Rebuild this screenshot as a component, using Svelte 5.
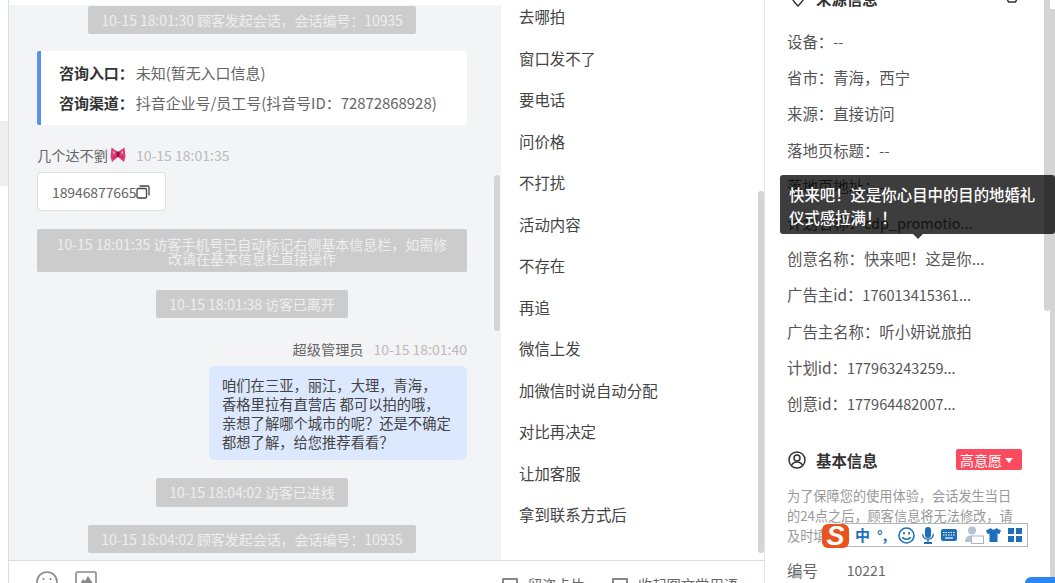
<script>
	const replies = ['去哪拍', '窗口发不了', '要电话', '问价格', '不打扰', '活动内容', '不存在', '再追', '微信上发', '加微信时说自动分配', '对比再决定', '让加客服', '拿到联系方式后'];
	const source = [
		['设备', '--'],
		['省市', '青海，西宁'],
		['来源', '直接访问'],
		['落地页标题', '--'],
		['落地页地址', '--'],
		['计划名称', 'cdp_promotio...'],
		['创意名称', '快来吧！这是你...'],
		['广告主id', '176013415361...'],
		['广告主名称', '听小妍说旅拍'],
		['计划id', '177963243259...'],
		['创意id', '177964482007...']
	];
	// values in latin letters and digits run narrower than the labels
	const isLatin = (v) => /^[\x00-\x7f]/.test(v);
</script>

<div class="page">
	<aside class="rail"><div class="rail-mark"></div></aside>

	<div class="work">
		<div class="columns">
			<section class="chat">
				<div class="notice">10-15 18:01:30 顾客发起会话，会话编号：10935</div>

				<div class="entry">
					<p><b>咨询入口：</b>未知(暂无入口信息)</p>
					<p><b>咨询渠道：</b>抖音企业号/员工号(抖音号ID：72872868928)</p>
				</div>

				<div class="meta">
					<span class="who">几个达不劉</span>
					<svg class="bow" viewBox="0 0 16 16" width="16" height="16">
						<path d="M8 5 1.500.500.500 9.500 2 15l6-5 6 5 1.500-5.500-1-9z" fill="#e23c78" />
						<path d="M3 3.500 5 6 3 7zM13 3.500 11 6l2 1z" fill="#f9a8c6" />
						<path d="M3 11l2-2M13 11l-2-2" stroke="#9c1c4c" stroke-width="1" />
						<rect x="6.500" y="4.500" width="3" height="5.500" rx="1" fill="#8e1440" />
					</svg>
					<span class="time">10-15 18:01:35</span>
				</div>
				<div class="phone">
					18946877665
					<svg viewBox="0 0 14 14" width="14" height="14" fill="none" stroke="#444" stroke-width="1.3">
						<rect x="1" y="3.500" width="9.500" height="9.500" rx="1.200" />
						<path d="M3.500 1h8.200A1.300 1.300 0 0 1 13 2.300v8.200" />
					</svg>
				</div>

				<div class="notice wide">10-15 18:01:35 访客手机号已自动标记右侧基本信息栏，如需修改请在基本信息栏直接操作</div>
				<div class="notice short">10-15 18:01:38 访客已离开</div>

				<div class="meta mine">
					<span class="who">超级管理员</span>
					<span class="time">10-15 18:01:40</span>
				</div>
				<div class="bubble">咱们在三亚，丽江，大理，青海，<br />香格里拉有直营店 都可以拍的哦，<br />亲想了解哪个城市的呢？还是不确定<br />都想了解，给您推荐看看？</div>

				<div class="notice short">10-15 18:04:02 访客已进线</div>
				<div class="notice last">10-15 18:04:02 顾客发起会话，会话编号：10935</div>

				<div class="thumb chat-thumb"></div>
			</section>

			<section class="replies">
				{#each replies as item}
					<div class="reply">{item}</div>
				{/each}
				<div class="thumb reply-thumb"></div>
			</section>
		</div>

		<footer class="tools">
			<div class="tools-left">
				<svg viewBox="0 0 22 22" width="22" height="22" fill="none" stroke="#888" stroke-width="1.6">
					<circle cx="11" cy="11" r="10" />
					<circle cx="7.500" cy="8" r="1.100" fill="#888" stroke="none" />
					<circle cx="14.500" cy="8" r="1.100" fill="#888" stroke="none" />
				</svg>
				<svg viewBox="0 0 22 22" width="22" height="22" fill="none" stroke="#888" stroke-width="1.6">
					<rect x="1" y="1" width="20" height="20" rx="1.500" />
					<path d="M3 17l5-9 2 2 3-5 6 9v3H3z" fill="#888" stroke="none" />
				</svg>
			</div>
			<div class="tools-right">
				<label class="check"><span class="box"></span>留资卡片</label>
				<label class="check"><span class="box"></span>收起图文常用语</label>
			</div>
		</footer>
	</div>

	<section class="info">
		<div class="info-body">
			<h3 class="head first">
				<svg viewBox="0 0 16 18" width="16" height="18" fill="none" stroke="#333" stroke-width="1.500">
					<path d="M8 17C4 13 1.500 10 1.500 7a6.500 6.500 0 0 1 13 0c0 3-2.500 6-6.500 10z" />
					<circle cx="8" cy="7" r="2" />
				</svg>
				<span>来源信息</span>
				<svg class="head-end" viewBox="0 0 16 16" width="16" height="16" fill="none" stroke="#333" stroke-width="1.500">
					<path d="M4.500 1h7L15 8l-3.500 7h-7L1 8z" />
				</svg>
			</h3>

			<ul class="rows">
				{#each source as [k, v]}
					<li>{k}：<span class:latin={isLatin(v)}>{v}</span></li>
				{/each}
			</ul>

			<h3 class="head second">
				<svg viewBox="0 0 18 18" width="18" height="18" fill="none" stroke="#333" stroke-width="1.500">
					<circle cx="9" cy="9" r="8" />
					<circle cx="9" cy="7" r="3" />
					<path d="M3.500 14.500c1-2.500 3-3.500 5.500-3.500s4.500 1 5.500 3.500" />
				</svg>
				<span>基本信息</span>
				<span class="tag">高意愿<i class="caret"></i></span>
			</h3>

			<p class="hint">为了保障您的使用体验，会话发生当日的24点之后，顾客信息将无法修改，请及时填写</p>
			<div class="field"><span>编号</span><span class="num">10221</span></div>
		</div>
		<div class="thumb info-thumb"></div>
	</section>

	<div class="page-scroll"></div>

	<div class="tooltip">快来吧！这是你心目中的目的地婚礼仪式感拉满！！</div>

	<div class="ime">
		<span class="ime-logo">S</span>
		<span class="ime-zh">中</span>
		<span class="ime-punc">°,</span>
		<svg viewBox="0 0 17 17" width="17" height="17" fill="none" stroke="#1c6fb8" stroke-width="1.600">
			<circle cx="8.500" cy="8.500" r="7.500" />
			<path d="M4.500 10c1 3 7 3 8 0" />
			<path d="M6 5v2.500M11 5v2.500" />
		</svg>
		<svg viewBox="0 0 12 17" width="12" height="17" fill="#1c6fb8">
			<rect x="3" y="0" width="6" height="11" rx="3" />
			<path d="M0 7h1.300c0 6 9.400 6 9.400 0H12c0 3.500-2 5.500-5.300 5.800V15H10v2H2v-2h3.300v-2.200C2 12.500 0 10.500 0 7z" />
		</svg>
		<svg viewBox="0 0 16 12" width="16" height="12">
			<rect width="16" height="12" rx="2" fill="#1c6fb8" />
			<path d="M2 3.500h12M2 6h12" stroke="#fff" stroke-width="1.200" stroke-dasharray="1.500 1" />
			<path d="M4 9h8" stroke="#fff" stroke-width="1.200" />
		</svg>
		<svg class="ime-user" viewBox="0 0 20 18" width="20" height="18">
			<circle cx="8" cy="4.500" r="4" fill="#b4c3d2" />
			<path d="M1 16c0-5 3-6.500 7-6.500V16z" fill="#b4c3d2" />
			<rect x="7.500" y="10" width="12" height="7.500" fill="#fff" stroke="#a8b4c0" />
		</svg>
		<svg viewBox="0 0 15 14" width="15" height="14" fill="#1c6fb8">
			<path d="M5 0 0 2.500 1.500 6l2-.500V14h8V5.500l2 .500L15 2.500 10 0c-.5 2-4.500 2-5 0z" />
		</svg>
		<svg viewBox="0 0 14 14" width="14" height="14" fill="#1c6fb8">
			<rect width="6" height="6" />
			<rect x="8" width="6" height="6" />
			<rect y="8" width="6" height="6" />
			<rect x="8" y="8" width="6" height="6" />
		</svg>
	</div>

	<div class="corner"></div>
</div>

<style>
	:global(body) {
		margin: 0;
		overflow: hidden;
	}

	.page {
		position: relative;
		display: flex;
		width: 1055px;
		height: 583px;
		overflow: hidden;
		background: #fff;
		color: #333;
		font-family: "Noto Sans CJK SC", "Liberation Sans", sans-serif;
		font-size: 14px;
	}

	.rail {
		flex: none;
		width: 8px;
		border-right: 1px solid #ddd;
		padding-top: 121px;
	}

	.rail-mark {
		height: 65px;
		background: #eee;
	}

	.work {
		flex: none;
		width: 756px;
		display: flex;
		flex-direction: column;
		border-right: 1px solid #e4e4e4;
		box-sizing: border-box;
	}

	.columns {
		display: flex;
		height: 560px;
		border-bottom: 1px solid #ddd;
		box-sizing: content-box;
	}

	.chat {
		position: relative;
		flex: none;
		width: 492px;
		box-sizing: border-box;
		display: flex;
		flex-direction: column;
		align-items: center;
		padding: 6px 34px 0 28px;
		background: #f3f4f6;
		box-shadow: inset 0 5px 0 #fff;
	}

	.notice {
		padding: 7.200px 13px;
		background: #ccc;
		color: #eee;
		line-height: 14px;
		letter-spacing: -0.06px;
		text-align: center;
		border-radius: 2px;
	}

	.notice.wide {
		align-self: stretch;
		margin-top: 18px;
		padding: 7.200px 18px;
		letter-spacing: 0;
	}

	.notice.short,
	.notice.last {
		margin-top: 18px;
	}

	.entry {
		align-self: stretch;
		margin-top: 17px;
		padding: 7px 18px;
		background: #fff;
		border-left: 4px solid #5b8fec;
		border-radius: 2px;
		color: #666;
		font-size: 15px;
		line-height: 30px;
		letter-spacing: -0.05px;
		white-space: nowrap;
	}

	.entry p {
		margin: 0;
	}

	.entry b {
		margin-right: 2px;
		color: #333;
		font-weight: 700;
	}

	.meta {
		align-self: stretch;
		display: flex;
		align-items: center;
		height: 20px;
		margin-top: 20px;
		color: #666;
	}

	.meta .who {
		font-size: 14.200px;
	}

	.meta .bow {
		margin-left: 2px;
	}

	.meta .time {
		margin-left: 10px;
		color: #bbb;
	}

	.meta.mine {
		justify-content: flex-end;
		margin-top: 21px;
	}

	.phone {
		align-self: flex-start;
		display: flex;
		align-items: center;
		height: 39px;
		box-sizing: border-box;
		margin-top: 7px;
		padding: 0 15px 0 14px;
		background: #fff;
		border: 1px solid #ddd;
		border-radius: 4px;
		color: #666;
		letter-spacing: -0.1px;
	}

	.bubble {
		align-self: flex-end;
		width: 258px;
		box-sizing: border-box;
		margin-top: 7px;
		padding: 9px 13px;
		background: #dce8fd;
		border-radius: 6px;
		color: #444;
		font-size: 14.300px;
		line-height: 19px;
		white-space: nowrap;
	}

	.thumb {
		position: absolute;
		background: #d4d4d4;
	}

	.chat-thumb {
		left: 485px;
		top: 175px;
		width: 6px;
		height: 156px;
		border-radius: 3px;
	}

	.replies {
		position: relative;
		flex: 1;
		background: #fff;
	}

	.reply {
		height: 41.500px;
		padding-left: 18px;
		font-size: 15.400px;
		line-height: 32px;
		color: #444;
	}

	.reply-thumb {
		left: 257px;
		top: 191px;
		width: 6px;
		height: 362px;
		border-radius: 3px;
	}

	.tools {
		flex: 1;
		display: flex;
		justify-content: space-between;
		overflow: hidden;
	}

	.tools-left {
		display: flex;
		gap: 17px;
		padding: 10px 0 0 27px;
	}

	.tools-right {
		display: flex;
		gap: 27px;
		padding-top: 14px;
		margin-right: 26px;
		color: #666;
		font-size: 14.300px;
	}

	.check {
		display: flex;
		align-items: flex-start;
		gap: 10px;
		line-height: 20px;
	}

	.box {
		width: 16px;
		height: 16px;
		box-sizing: border-box;
		margin-top: 3px;
		border: 2px solid #888;
		border-radius: 1px;
	}

	.info {
		position: relative;
		flex: 1;
		overflow: hidden;
		background: #fff;
	}

	.info-body {
		padding: 0 33px 0 22px;
		margin-top: -13px;
	}

	.head {
		display: flex;
		align-items: center;
		margin: 0;
		font-size: 15.400px;
		font-weight: 700;
		color: #333;
		line-height: 20px;
		white-space: nowrap;
	}

	.head svg {
		flex: none;
	}

	.head.first svg:first-child {
		margin: 0 10px 0 3px;
	}

	.head.second svg:first-child {
		margin: 0 10px 0 1px;
	}

	.head .head-end {
		margin: 0 2px 6px auto;
	}

	.head .tag {
		display: flex;
		align-items: center;
		height: 21px;
		margin-left: auto;
		padding: 0 9px 0 4px;
		background: #fa4b5f;
		border-radius: 2px;
		color: #fff;
		font-size: 14px;
		font-weight: 400;
	}

	.caret {
		margin: 1px 0 0 3px;
		border: 4px solid transparent;
		border-top: 5px solid #fff;
		border-bottom: 0;
	}

	.rows {
		margin: 14px 0 0;
		padding: 0;
		list-style: none;
		color: #555;
		font-size: 15.400px;
	}

	.rows li {
		height: 36.200px;
		line-height: 36.200px;
		white-space: nowrap;
	}

	.latin {
		font-size: 14.500px;
	}

	.head.second {
		margin-top: 28px;
	}

	.hint {
		margin: 16px 0 0;
		font-size: 13.200px;
		line-height: 20px;
		color: #999;
	}

	.field {
		display: flex;
		gap: 29px;
		margin-top: 14px;
		color: #666;
		font-size: 15.400px;
		line-height: 20px;
	}

	.num {
		font-size: 14px;
	}

	.info-thumb {
		left: 279px;
		top: 0;
		width: 6px;
		height: 311px;
		border-radius: 0 0 3px 3px;
	}

	.page-scroll {
		position: absolute;
		right: 0;
		top: 9px;
		bottom: 0;
		width: 5px;
		background: #d4d4d4;
	}

	.tooltip {
		position: absolute;
		left: 780px;
		top: 175px;
		width: 275px;
		height: 59px;
		box-sizing: border-box;
		padding: 8px 9px;
		background: rgba(0, 0, 0, 0.76);
		border-radius: 3px;
		color: #fff;
		font-size: 15.400px;
		font-weight: 500;
		line-height: 23px;
	}

	.tooltip::after {
		content: "";
		position: absolute;
		left: 133px;
		top: 59px;
		border: 5px solid transparent;
		border-top: 5px solid rgba(0, 0, 0, 0.76);
		border-bottom: 0;
	}

	.ime {
		position: absolute;
		left: 841px;
		top: 523px;
		width: 187px;
		height: 24px;
		box-sizing: border-box;
		display: flex;
		align-items: center;
		gap: 7px;
		padding-left: 13px;
		background: #fff;
		border: 1px solid #b4b8bc;
		color: #1c6fb8;
	}

	.ime-user {
		margin-right: -5px;
	}

	.ime-logo {
		position: absolute;
		left: -20px;
		top: 0;
		width: 27px;
		height: 24px;
		background: #e8531f;
		border-radius: 6px;
		color: #fff;
		font: italic 900 27px/24px "Liberation Sans", sans-serif;
		text-align: center;
	}

	.ime-zh {
		font-size: 15px;
		font-weight: 700;
		line-height: 20px;
	}

	.ime-punc {
		width: 14px;
		font-size: 14px;
		font-weight: 700;
		line-height: 14px;
	}

	.corner {
		position: absolute;
		right: 0;
		bottom: 0;
		width: 30px;
		height: 6px;
		background: #2b85f5;
		border-radius: 6px 0 0 0;
	}
</style>
